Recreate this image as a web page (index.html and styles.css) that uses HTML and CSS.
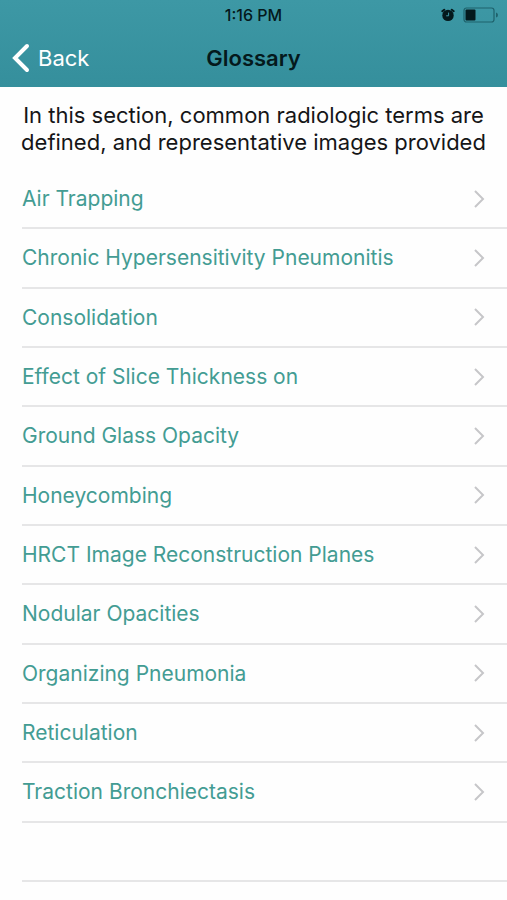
FILE: index.html
```html
<!DOCTYPE html>
<html lang="en">
<head>
<meta charset="utf-8">
<meta name="viewport" content="width=device-width, initial-scale=1">
<title>Glossary</title>
<link rel="stylesheet" href="styles.css">
</head>
<body>
<header class="header">
  <div class="status">
    <span class="time">1:16 PM</span>
    <span class="status-icons">
      <svg class="alarm" viewBox="0 0 14 14" aria-hidden="true">
        <circle cx="7" cy="7.4" r="5.7" fill="#04191c"/>
        <path d="M1.300 3.200 3.200 1.700M12.700 3.200 10.800 1.700" stroke="#04191c" stroke-width="2" stroke-linecap="round"/>
        <path d="M7.600 4.600V7.800H5.200" fill="none" stroke="#3d98a5" stroke-width="1"/>
      </svg>
      <svg class="battery" viewBox="0 0 36 16" aria-hidden="true">
        <rect x="1" y="1" width="30" height="14" rx="2.5" fill="none" stroke="#1f626c" stroke-width="1.2"/>
        <rect x="2.5" y="2.5" width="10" height="11" rx="1" fill="#04191c"/>
        <path d="M33 5.5Q35 6 35 8T33 10.500Z" fill="#1f626c"/>
      </svg>
    </span>
  </div>
  <nav class="nav">
    <a class="back" href="#">
      <svg class="back-icon" viewBox="0 0 18 30" aria-hidden="true"><path d="M15 3 3 15 15 27" fill="none" stroke="#fff" stroke-width="4" stroke-linecap="round" stroke-linejoin="miter"/></svg>
      <span>Back</span>
    </a>
    <h1 class="title">Glossary</h1>
  </nav>
</header>
<main class="main">
  <p class="intro">In this section, common radiologic terms are defined, and representative images provided</p>
  <ul class="list">
    <li class="row"><a class="link" href="#">Air Trapping<svg class="chevron" viewBox="0 0 12 18" aria-hidden="true"><path d="M2 1 10 9 2 17"/></svg></a></li>
    <li class="row"><a class="link" href="#">Chronic Hypersensitivity Pneumonitis<svg class="chevron" viewBox="0 0 12 18" aria-hidden="true"><path d="M2 1 10 9 2 17"/></svg></a></li>
    <li class="row"><a class="link" href="#">Consolidation<svg class="chevron" viewBox="0 0 12 18" aria-hidden="true"><path d="M2 1 10 9 2 17"/></svg></a></li>
    <li class="row"><a class="link" href="#">Effect of Slice Thickness on<svg class="chevron" viewBox="0 0 12 18" aria-hidden="true"><path d="M2 1 10 9 2 17"/></svg></a></li>
    <li class="row"><a class="link" href="#">Ground Glass Opacity<svg class="chevron" viewBox="0 0 12 18" aria-hidden="true"><path d="M2 1 10 9 2 17"/></svg></a></li>
    <li class="row"><a class="link" href="#">Honeycombing<svg class="chevron" viewBox="0 0 12 18" aria-hidden="true"><path d="M2 1 10 9 2 17"/></svg></a></li>
    <li class="row"><a class="link" href="#">HRCT Image Reconstruction Planes<svg class="chevron" viewBox="0 0 12 18" aria-hidden="true"><path d="M2 1 10 9 2 17"/></svg></a></li>
    <li class="row"><a class="link" href="#">Nodular Opacities<svg class="chevron" viewBox="0 0 12 18" aria-hidden="true"><path d="M2 1 10 9 2 17"/></svg></a></li>
    <li class="row"><a class="link" href="#">Organizing Pneumonia<svg class="chevron" viewBox="0 0 12 18" aria-hidden="true"><path d="M2 1 10 9 2 17"/></svg></a></li>
    <li class="row"><a class="link" href="#">Reticulation<svg class="chevron" viewBox="0 0 12 18" aria-hidden="true"><path d="M2 1 10 9 2 17"/></svg></a></li>
    <li class="row"><a class="link" href="#">Traction Bronchiectasis<svg class="chevron" viewBox="0 0 12 18" aria-hidden="true"><path d="M2 1 10 9 2 17"/></svg></a></li>
    <li class="row" aria-hidden="true"></li>
  </ul>
</main>
</body>
</html>
```
FILE: styles.css
```css
* {
  box-sizing: border-box;
}

body {
  margin: 0;
  min-height: 100vh;
  display: flex;
  flex-direction: column;
  background: #fefefe;
  color: #151517;
  font-family: Inter, "Liberation Sans", sans-serif;
  font-size: 21px;
}

.header {
  background: linear-gradient(#3d98a5, #358f9c);
  color: #04191c;
}

.status,
.nav {
  display: grid;
  grid-template-columns: 1fr auto 1fr;
  align-items: center;
}

.status {
  height: 29px;
  padding: 0 8px;
}

.time {
  grid-column: 2;
  font-size: 16px;
  font-weight: 500;
}

.status-icons {
  display: flex;
  justify-content: flex-end;
  align-items: center;
  gap: 8px;
}

.alarm {
  width: 14px;
  height: 14px;
}

.battery {
  width: 36px;
  height: 16px;
}

.nav {
  height: 58px;
  padding: 0 12px;
}

.back {
  display: flex;
  align-items: center;
  gap: 8px;
  color: #fff;
  font-size: 22px;
  text-decoration: none;
}

.back-icon {
  width: 18px;
  height: 30px;
}

.title {
  margin: 0;
  font-size: 22px;
  font-weight: 600;
}

.main {
  flex: 1;
  display: flex;
  flex-direction: column;
  padding-bottom: 18px;
}

.intro {
  margin: 0;
  padding: 15px 16px 14px;
  font-size: 22px;
  line-height: 27px;
  text-align: center;
}

.list {
  flex: 1;
  display: grid;
  grid-auto-rows: 1fr;
  margin: 0;
  padding: 0 0 0 22px;
  list-style: none;
}

.row {
  display: flex;
  min-height: 48px;
  border-bottom: 2px solid #e6e6e7;
}

.link {
  flex: 1;
  display: flex;
  align-items: center;
  justify-content: space-between;
  padding-right: 22px;
  color: #439c93;
  text-decoration: none;
}

.chevron {
  width: 12px;
  height: 18px;
  fill: none;
  stroke: #c6c6c9;
  stroke-width: 2;
}
```
